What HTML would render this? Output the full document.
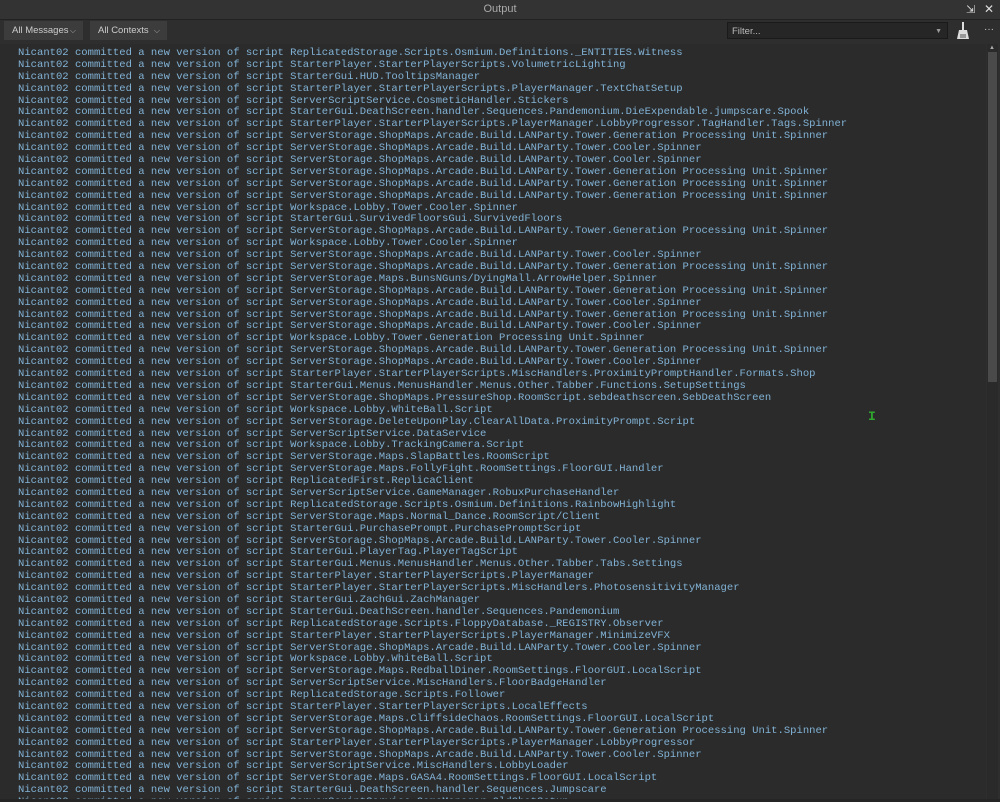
<!DOCTYPE html>
<html><head><meta charset="utf-8"><style>
body{margin:0;width:1000px;height:802px;background:#2e2e2e;overflow:hidden;font-family:"Liberation Sans",sans-serif;position:relative}
.title{position:absolute;left:0;top:0;width:1000px;height:19px;background:#333;color:#aaa;font-size:11px;text-align:center;line-height:19px;border-bottom:1px solid #222}
.dd{position:absolute;top:21px;height:19px;background:#3c3c3c;color:#ccc;font-size:9.5px;line-height:19px;padding-left:8px;box-sizing:border-box}
.dd span{position:absolute;right:7px;top:0;color:#aaa;font-size:8px}
.filter{position:absolute;left:727px;top:22px;width:221px;height:17px;background:#262626;border:1px solid #1a1a1a;color:#bbb;font-size:9.5px;line-height:17px;padding-left:4px;box-sizing:border-box}
.out{position:absolute;left:0;top:44px;width:986px;height:755px;overflow:hidden;background:#2b2b2b}
pre{margin:0;padding:4px 0 0 18px;font-family:"Liberation Mono",monospace;font-size:10.55px;line-height:11.885px;color:#82b3d6}
.sb{position:absolute;left:987px;top:44px;width:11px;height:758px;background:#2a2a2a}
.th{position:absolute;left:988px;top:52px;width:9px;height:330px;background:#4a4a4a}
.bot{position:absolute;left:0;top:799px;width:1000px;height:3px;background:#252525}
</style></head><body>
<div class="title">Output</div>
<div style="position:absolute;left:966px;top:3px;color:#ddd;font-size:11px">⇲</div>
<div style="position:absolute;left:984px;top:2px;color:#ddd;font-size:12px">✕</div>
<div class="dd" style="left:4px;width:79px">All Messages<span>⌵</span></div>
<div class="dd" style="left:90px;width:77px">All Contexts<span>⌵</span></div>
<div class="filter">Filter...<span style="position:absolute;right:5px;top:0;font-size:7px;color:#999">▼</span></div>
<svg style="position:absolute;left:956px;top:22px" width="14" height="18" viewBox="0 0 14 18"><rect x="6" y="0" width="2" height="8" fill="#ddd"/><path d="M3 8h8l2 9H1z" fill="#ddd"/><path d="M5 12v4M7 12v4M9 12v4" stroke="#333" stroke-width="0.8"/></svg>
<div style="position:absolute;left:984px;top:24px;color:#ccc;font-size:10px">···</div>
<div class="out"><pre>Nicant02 committed a new version of script ReplicatedStorage.Scripts.Osmium.Definitions._ENTITIES.Witness
Nicant02 committed a new version of script StarterPlayer.StarterPlayerScripts.VolumetricLighting
Nicant02 committed a new version of script StarterGui.HUD.TooltipsManager
Nicant02 committed a new version of script StarterPlayer.StarterPlayerScripts.PlayerManager.TextChatSetup
Nicant02 committed a new version of script ServerScriptService.CosmeticHandler.Stickers
Nicant02 committed a new version of script StarterGui.DeathScreen.handler.Sequences.Pandemonium.DieExpendable.jumpscare.Spook
Nicant02 committed a new version of script StarterPlayer.StarterPlayerScripts.PlayerManager.LobbyProgressor.TagHandler.Tags.Spinner
Nicant02 committed a new version of script ServerStorage.ShopMaps.Arcade.Build.LANParty.Tower.Generation Processing Unit.Spinner
Nicant02 committed a new version of script ServerStorage.ShopMaps.Arcade.Build.LANParty.Tower.Cooler.Spinner
Nicant02 committed a new version of script ServerStorage.ShopMaps.Arcade.Build.LANParty.Tower.Cooler.Spinner
Nicant02 committed a new version of script ServerStorage.ShopMaps.Arcade.Build.LANParty.Tower.Generation Processing Unit.Spinner
Nicant02 committed a new version of script ServerStorage.ShopMaps.Arcade.Build.LANParty.Tower.Generation Processing Unit.Spinner
Nicant02 committed a new version of script ServerStorage.ShopMaps.Arcade.Build.LANParty.Tower.Generation Processing Unit.Spinner
Nicant02 committed a new version of script Workspace.Lobby.Tower.Cooler.Spinner
Nicant02 committed a new version of script StarterGui.SurvivedFloorsGui.SurvivedFloors
Nicant02 committed a new version of script ServerStorage.ShopMaps.Arcade.Build.LANParty.Tower.Generation Processing Unit.Spinner
Nicant02 committed a new version of script Workspace.Lobby.Tower.Cooler.Spinner
Nicant02 committed a new version of script ServerStorage.ShopMaps.Arcade.Build.LANParty.Tower.Cooler.Spinner
Nicant02 committed a new version of script ServerStorage.ShopMaps.Arcade.Build.LANParty.Tower.Generation Processing Unit.Spinner
Nicant02 committed a new version of script ServerStorage.Maps.BunsNGuns/DyingMall.ArrowHelper.Spinner
Nicant02 committed a new version of script ServerStorage.ShopMaps.Arcade.Build.LANParty.Tower.Generation Processing Unit.Spinner
Nicant02 committed a new version of script ServerStorage.ShopMaps.Arcade.Build.LANParty.Tower.Cooler.Spinner
Nicant02 committed a new version of script ServerStorage.ShopMaps.Arcade.Build.LANParty.Tower.Generation Processing Unit.Spinner
Nicant02 committed a new version of script ServerStorage.ShopMaps.Arcade.Build.LANParty.Tower.Cooler.Spinner
Nicant02 committed a new version of script Workspace.Lobby.Tower.Generation Processing Unit.Spinner
Nicant02 committed a new version of script ServerStorage.ShopMaps.Arcade.Build.LANParty.Tower.Generation Processing Unit.Spinner
Nicant02 committed a new version of script ServerStorage.ShopMaps.Arcade.Build.LANParty.Tower.Cooler.Spinner
Nicant02 committed a new version of script StarterPlayer.StarterPlayerScripts.MiscHandlers.ProximityPromptHandler.Formats.Shop
Nicant02 committed a new version of script StarterGui.Menus.MenusHandler.Menus.Other.Tabber.Functions.SetupSettings
Nicant02 committed a new version of script ServerStorage.ShopMaps.PressureShop.RoomScript.sebdeathscreen.SebDeathScreen
Nicant02 committed a new version of script Workspace.Lobby.WhiteBall.Script
Nicant02 committed a new version of script ServerStorage.DeleteUponPlay.ClearAllData.ProximityPrompt.Script
Nicant02 committed a new version of script ServerScriptService.DataService
Nicant02 committed a new version of script Workspace.Lobby.TrackingCamera.Script
Nicant02 committed a new version of script ServerStorage.Maps.SlapBattles.RoomScript
Nicant02 committed a new version of script ServerStorage.Maps.FollyFight.RoomSettings.FloorGUI.Handler
Nicant02 committed a new version of script ReplicatedFirst.ReplicaClient
Nicant02 committed a new version of script ServerScriptService.GameManager.RobuxPurchaseHandler
Nicant02 committed a new version of script ReplicatedStorage.Scripts.Osmium.Definitions.RainbowHighlight
Nicant02 committed a new version of script ServerStorage.Maps.Normal_Dance.RoomScript/Client
Nicant02 committed a new version of script StarterGui.PurchasePrompt.PurchasePromptScript
Nicant02 committed a new version of script ServerStorage.ShopMaps.Arcade.Build.LANParty.Tower.Cooler.Spinner
Nicant02 committed a new version of script StarterGui.PlayerTag.PlayerTagScript
Nicant02 committed a new version of script StarterGui.Menus.MenusHandler.Menus.Other.Tabber.Tabs.Settings
Nicant02 committed a new version of script StarterPlayer.StarterPlayerScripts.PlayerManager
Nicant02 committed a new version of script StarterPlayer.StarterPlayerScripts.MiscHandlers.PhotosensitivityManager
Nicant02 committed a new version of script StarterGui.ZachGui.ZachManager
Nicant02 committed a new version of script StarterGui.DeathScreen.handler.Sequences.Pandemonium
Nicant02 committed a new version of script ReplicatedStorage.Scripts.FloppyDatabase._REGISTRY.Observer
Nicant02 committed a new version of script StarterPlayer.StarterPlayerScripts.PlayerManager.MinimizeVFX
Nicant02 committed a new version of script ServerStorage.ShopMaps.Arcade.Build.LANParty.Tower.Cooler.Spinner
Nicant02 committed a new version of script Workspace.Lobby.WhiteBall.Script
Nicant02 committed a new version of script ServerStorage.Maps.RedballDiner.RoomSettings.FloorGUI.LocalScript
Nicant02 committed a new version of script ServerScriptService.MiscHandlers.FloorBadgeHandler
Nicant02 committed a new version of script ReplicatedStorage.Scripts.Follower
Nicant02 committed a new version of script StarterPlayer.StarterPlayerScripts.LocalEffects
Nicant02 committed a new version of script ServerStorage.Maps.CliffsideChaos.RoomSettings.FloorGUI.LocalScript
Nicant02 committed a new version of script ServerStorage.ShopMaps.Arcade.Build.LANParty.Tower.Generation Processing Unit.Spinner
Nicant02 committed a new version of script StarterPlayer.StarterPlayerScripts.PlayerManager.LobbyProgressor
Nicant02 committed a new version of script ServerStorage.ShopMaps.Arcade.Build.LANParty.Tower.Cooler.Spinner
Nicant02 committed a new version of script ServerScriptService.MiscHandlers.LobbyLoader
Nicant02 committed a new version of script ServerStorage.Maps.GASA4.RoomSettings.FloorGUI.LocalScript
Nicant02 committed a new version of script StarterGui.DeathScreen.handler.Sequences.Jumpscare
Nicant02 committed a new version of script ServerScriptService.GameManager.OldChatSetup</pre></div>
<div class="sb"></div><div class="th"></div>
<div style="position:absolute;left:989px;top:45px;color:#aaa;font-size:6px">▲</div>
<div style="position:absolute;left:868px;top:409px;color:#2fa52f;font-size:13px;font-family:'Liberation Mono',monospace;font-weight:bold">I</div>
<div class="bot"></div>
</body></html>
